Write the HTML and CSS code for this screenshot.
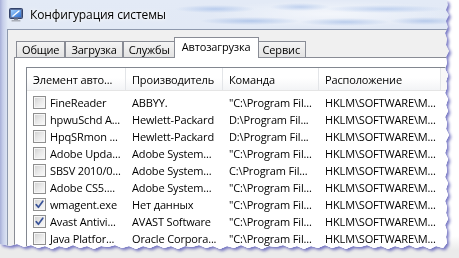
FILE: index.html
```html
<!DOCTYPE html>
<html lang="ru">
<head>
<meta charset="utf-8">
<title>Конфигурация системы</title>
<link rel="stylesheet" href="styles.css">
</head>
<body>
<div class="shot">
  <div class="window">
    <div class="titlebar">
      <svg class="app-icon" viewBox="0 0 14 14" aria-hidden="true">
        <defs>
          <linearGradient id="scr" x1="0" y1="0" x2="1" y2="1">
            <stop offset="0" stop-color="#9fd0ff"/>
            <stop offset="1" stop-color="#2f6fd0"/>
          </linearGradient>
        </defs>
        <rect x="0.5" y="0.5" width="13" height="10" rx="1" fill="#5a6f9a" stroke="#34436a" stroke-width="1"/>
        <rect x="2" y="2" width="10" height="7" fill="url(#scr)"/>
        <path d="M4 8 L10 3" stroke="#fff" stroke-width="1.4" stroke-linecap="round"/>
        <path d="M3.5 8.3 L4.8 7.2" stroke="#e8f0ff" stroke-width="1"/>
        <rect x="5" y="10.5" width="4" height="1.5" fill="#8a8f99"/>
        <rect x="2.5" y="12" width="9" height="1.6" rx="0.5" fill="#a9aeb8"/>
      </svg>
      <span class="title">Конфигурация системы</span>
    </div>
    <div class="frame">
      <div class="client">
        <div class="tabs">
          <div class="tab">Общие</div>
          <div class="tab">Загрузка</div>
          <div class="tab">Службы</div>
          <div class="tab active">Автозагрузка</div>
          <div class="tab">Сервис</div>
        </div>
        <div class="panel">
          <div class="list">
            <div class="list-head">
              <div class="hcell">Элемент авто...</div>
              <div class="hcell">Производитель</div>
              <div class="hcell">Команда</div>
              <div class="hcell">Расположение</div>
              <div class="hcell hcell-rest"></div>
            </div>
            <div class="list-body">
              <div class="row">
                <div class="cell item"><span class="cb"></span>FineReader</div>
                <div class="cell">ABBYY.</div>
                <div class="cell">"C:\Program Fil...</div>
                <div class="cell">HKLM\SOFTWARE\M...</div>
              </div>
              <div class="row">
                <div class="cell item"><span class="cb"></span>hpwuSchd A...</div>
                <div class="cell">Hewlett-Packard</div>
                <div class="cell">D:\Program Fil...</div>
                <div class="cell">HKLM\SOFTWARE\M...</div>
              </div>
              <div class="row">
                <div class="cell item"><span class="cb"></span>HpqSRmon ...</div>
                <div class="cell">Hewlett-Packard</div>
                <div class="cell">D:\Program Fil...</div>
                <div class="cell">HKLM\SOFTWARE\M...</div>
              </div>
              <div class="row">
                <div class="cell item"><span class="cb"></span>Adobe Upda...</div>
                <div class="cell">Adobe System...</div>
                <div class="cell">"C:\Program Fil...</div>
                <div class="cell">HKLM\SOFTWARE\M...</div>
              </div>
              <div class="row">
                <div class="cell item"><span class="cb"></span>SBSV 2010/0...</div>
                <div class="cell">Adobe System...</div>
                <div class="cell">C:\Program Fil...</div>
                <div class="cell">HKLM\SOFTWARE\M...</div>
              </div>
              <div class="row">
                <div class="cell item"><span class="cb"></span>Adobe CS5....</div>
                <div class="cell">Adobe System...</div>
                <div class="cell">"C:\Program Fil...</div>
                <div class="cell">HKLM\SOFTWARE\M...</div>
              </div>
              <div class="row">
                <div class="cell item"><span class="cb checked"><svg viewBox="0 0 11 11"><path d="M2.2 5.6 L4.4 8.3 L8.8 2.2"/></svg></span>wmagent.exe</div>
                <div class="cell">Нет данных</div>
                <div class="cell">"C:\Program Fil...</div>
                <div class="cell">HKLM\SOFTWARE\M...</div>
              </div>
              <div class="row">
                <div class="cell item"><span class="cb checked"><svg viewBox="0 0 11 11"><path d="M2.2 5.6 L4.4 8.3 L8.8 2.2"/></svg></span>Avast Antivi...</div>
                <div class="cell">AVAST Software</div>
                <div class="cell">"C:\Program Fil...</div>
                <div class="cell">HKLM\SOFTWARE\M...</div>
              </div>
              <div class="row">
                <div class="cell item"><span class="cb"></span>Java Platfor...</div>
                <div class="cell">Oracle Corpora...</div>
                <div class="cell">"C:\Program Fil...</div>
                <div class="cell">HKLM\SOFTWARE\M...</div>
              </div>
            </div>
          </div>
        </div>
      </div>
    </div>
  </div>
</div>
</body>
</html>
```
FILE: styles.css
```css
* { box-sizing: border-box; }
html, body { margin: 0; height: 100%; }
body {
  background: linear-gradient(#ffffff 0, #ffffff 236px, #ebebeb 250px);
  font-family: "Open Sans", "Noto Sans", sans-serif;
  font-size: 11px;
  letter-spacing: -0.15px;
  color: #000;
  overflow: hidden;
}
.shot {
  width: 459px;
  height: 258px;
  filter: drop-shadow(2px 2px 1.5px rgba(96, 96, 186, 0.85));
}
.window {
  width: 459px;
  height: 258px;
  display: flex;
  flex-direction: column;
  background:
    linear-gradient(90deg, #a7afd8 0, #c7cfea 3px, #dce4f3 7px, rgba(220,228,243,0) 8px),
    linear-gradient(#e3eaf6, #d8e1f1);
  clip-path: polygon(0 0, 447px 0, 448px 5px, 446px 10px, 449px 15px, 446px 21px, 448px 27px, 445px 33px, 447px 39px, 446px 45px, 449px 51px, 446px 57px, 447px 63px, 445px 69px, 448px 75px, 446px 81px, 447px 87px, 445px 93px, 448px 99px, 446px 105px, 448px 111px, 445px 117px, 447px 123px, 446px 129px, 449px 135px, 446px 141px, 447px 147px, 445px 153px, 448px 159px, 446px 165px, 447px 171px, 445px 177px, 448px 183px, 446px 189px, 448px 195px, 445px 201px, 447px 207px, 446px 213px, 448px 219px, 445px 225px, 447px 231px, 446px 237px, 447px 243px, 443px 248px, 436px 246px, 430px 249px, 423px 246px, 416px 248px, 409px 245px, 402px 248px, 395px 246px, 388px 249px, 381px 246px, 374px 248px, 367px 245px, 360px 247px, 353px 246px, 346px 249px, 339px 246px, 332px 248px, 325px 245px, 318px 248px, 311px 246px, 304px 249px, 297px 246px, 290px 248px, 283px 245px, 276px 247px, 269px 246px, 262px 249px, 255px 246px, 248px 248px, 241px 245px, 234px 248px, 227px 246px, 220px 249px, 213px 246px, 206px 248px, 199px 245px, 192px 247px, 185px 246px, 178px 249px, 171px 246px, 164px 248px, 157px 245px, 150px 248px, 143px 246px, 136px 249px, 129px 246px, 122px 248px, 115px 245px, 108px 247px, 101px 246px, 94px 249px, 87px 246px, 80px 248px, 73px 245px, 66px 248px, 59px 246px, 52px 249px, 45px 246px, 38px 248px, 31px 245px, 24px 247px, 17px 244px, 10px 246px, 0 244px);
}
.titlebar {
  height: 29px;
  flex: none;
  display: flex;
  align-items: center;
  padding-left: 9px;
  gap: 7px;
  background:
    radial-gradient(ellipse 40px 4px at 215px 9px, rgba(150,180,230,0.55), rgba(150,180,230,0)),
    radial-gradient(ellipse 30px 4px at 300px 7px, rgba(150,180,230,0.5), rgba(150,180,230,0)),
    radial-gradient(ellipse 60px 4px at 385px 9px, rgba(150,180,230,0.5), rgba(150,180,230,0)),
    radial-gradient(ellipse 50px 4px at 250px 21px, rgba(140,172,225,0.55), rgba(140,172,225,0)),
    radial-gradient(ellipse 45px 4px at 345px 22px, rgba(140,172,225,0.5), rgba(140,172,225,0)),
    radial-gradient(ellipse 35px 4px at 425px 21px, rgba(140,172,225,0.5), rgba(140,172,225,0)),
    radial-gradient(ellipse 120px 14px at 330px 14px, rgba(255,255,255,0.6), rgba(255,255,255,0));
}
.app-icon { width: 14px; height: 14px; flex: none; }
.title {
  font-size: 12px;
  letter-spacing: -0.1px;
  text-shadow: 0 0 6px #fff, 0 0 3px #fff;
}
.frame {
  flex: 1;
  min-height: 0;
  display: flex;
  padding-left: 7px;
}
.client {
  flex: 1;
  min-width: 0;
  display: flex;
  flex-direction: column;
  background: #f0f0f0;
  border-top: 1px solid #8e99ae;
  border-left: 1px solid #8e99ae;
  padding: 7px 0 0 6px;
}
.tabs {
  height: 20px;
  flex: none;
  display: flex;
  align-items: flex-end;
  padding-left: 2px;
  position: relative;
  z-index: 1;
}
.tab {
  height: 16px;
  padding: 1px 5px 0;
  line-height: 14px;
  border: 1px solid #898c95;
  border-bottom: 0;
  background: linear-gradient(#f4f4f4, #e3e3e3);
  white-space: nowrap;
}
.tab.active {
  height: 21px;
  margin: 0 -2px -1px;
  padding: 2px 7px 0;
  background: #fff;
  position: relative;
}
.panel {
  flex: 1;
  min-height: 0;
  display: flex;
  flex-direction: column;
  background: #fff;
  border: 1px solid #898c95;
  border-right: 0;
  border-bottom: 0;
  padding: 9px 0 0 11px;
}
.list {
  flex: 1;
  min-height: 0;
  background: #fff;
  border-top: 1px solid #828790;
  border-left: 1px solid #828790;
}
.list-head,
.row {
  display: grid;
  grid-template-columns: 99px 97px 96px 122px 1fr;
}
.list-head {
  height: 23px;
  border-bottom: 1px solid #e5e5e5;
  background: linear-gradient(#ffffff 0, #ffffff 45%, #f3f4f6 100%);
}
.hcell {
  border-right: 1px solid #e3e5e8;
  padding: 4px 0 0 6px;
  line-height: 15px;
  white-space: nowrap;
  overflow: hidden;
}
.hcell-rest { border-right: 0; background: #f7f7f7; }
.list-body { padding-top: 3px; }
.row { height: 17px; align-items: center; }
.cell {
  padding-left: 6px;
  white-space: nowrap;
  overflow: hidden;
  line-height: 17px;
}
.cell.item {
  display: flex;
  align-items: center;
  gap: 4px;
}
.cb {
  width: 13px;
  height: 13px;
  flex: none;
  border: 1px solid #8f8f8f;
  background: linear-gradient(135deg, #cfcfcf 0, #e9e9e9 50%, #fbfbfb 100%);
  box-shadow: inset 0 0 0 1px #f6f6f6;
  display: flex;
  align-items: center;
  justify-content: center;
}
.cb svg { width: 11px; height: 11px; }
.cb svg path {
  fill: none;
  stroke: #3b5499;
  stroke-width: 1.7;
  stroke-linecap: round;
  stroke-linejoin: round;
}
```
